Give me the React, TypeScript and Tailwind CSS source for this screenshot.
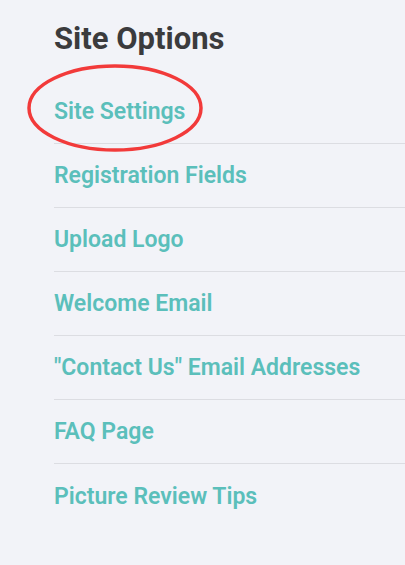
const links = [
  "Site Settings",
  "Registration Fields",
  "Upload Logo",
  "Welcome Email",
  '"Contact Us" Email Addresses',
  "FAQ Page",
  "Picture Review Tips",
];

export default function App() {
  return (
    <div className="relative h-[565px] w-[405px] overflow-hidden bg-[#f2f3f8] pl-[54px] font-['Roboto',sans-serif]">
      <h1 className="pt-[21px] pb-[23px] text-[31px] leading-[36px] font-bold text-[#3b3b3d]">
        Site Options
      </h1>
      <ul>
        {links.map((label, i) => (
          <li
            key={label}
            className={`flex h-16 items-center pt-[2px] ${i < links.length - 1 ? "border-b border-[#dcdde2]" : ""}`}
          >
            <a href="#" className="text-[23px] font-semibold text-[#5bbfbb]">
              {label}
            </a>
          </li>
        ))}
      </ul>

      {/* red circle annotation */}
      <svg
        className="pointer-events-none absolute left-0 top-0"
        width="405"
        height="565"
        viewBox="0 0 405 565"
      >
        <ellipse cx="115" cy="108" rx="86" ry="42" fill="none" stroke="#f23a3a" strokeWidth="3.5" />
      </svg>
    </div>
  );
}
